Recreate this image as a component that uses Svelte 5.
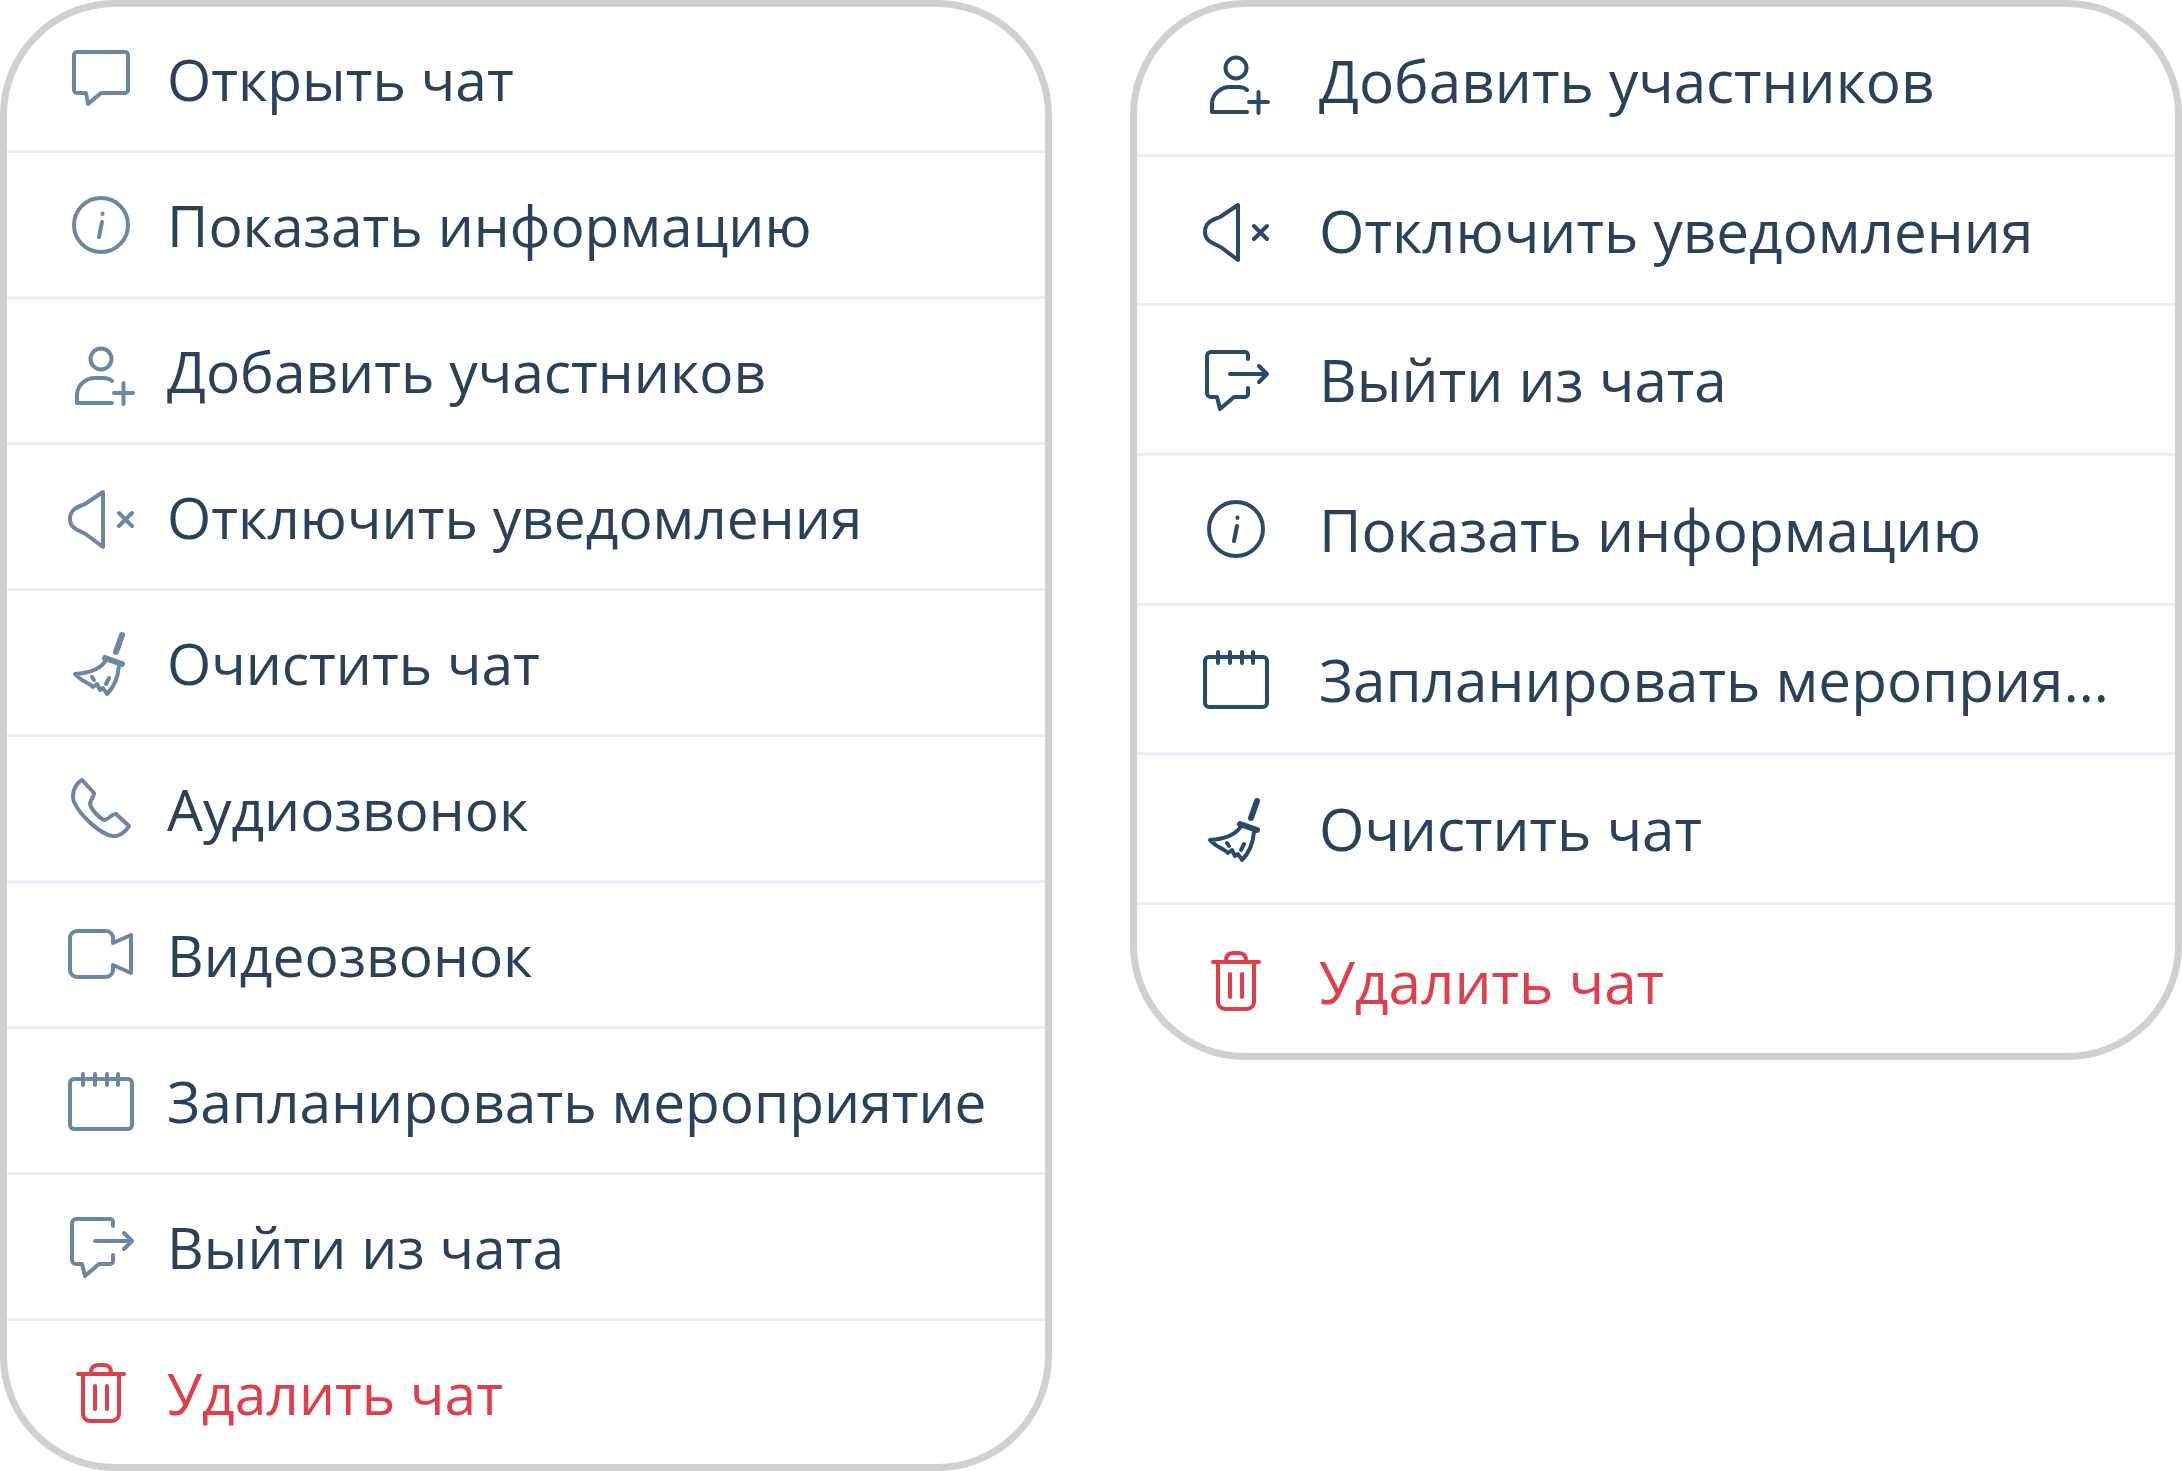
<script lang="ts">
  // icon paths are drawn on a 72x72 box, stroke only
  const icons: Record<string, string> = {
    chat: 'M12 9H60a3 3 0 0 1 3 3V47a3 3 0 0 1-3 3H36L23 61 21 50H12a3 3 0 0 1-3-3V12a3 3 0 0 1 3-3Z',
    info: 'M9 36a27 27 0 1 0 54 0a27 27 0 1 0-54 0ZM37.5 24.5v.5M37 33 34 48',
    user: 'M25.5 24a10.5 10.5 0 1 0 21 0a10.5 10.5 0 1 0-21 0ZM47 68H12V60C12 50 21 43 30 43H38C42 43 45 44 47 46M49 58H68M58.5 48V69',
    mute: 'M38 11V66L22 54C17 50 5 49 5 38C5 28 13 26 20 23ZM54 32 67 45M67 32 54 45',
    broom:
      'M41 33C36 42 24 46 10 47C16 54 24 56 28 60L32 57 35 63 38 61 42 67C49 60 53 50 54 39M29 53 27 50M41 57 44 51',
    phone:
      'M17 7 29 20C30 22 25 27 25 31C26 36 34 45 39 47C43 47 48 40 51 41L64 53C60 60 53 64 47 63C36 61 16 44 9 29C6 21 10 11 17 7Z',
    video:
      'M12 12H41a7 7 0 0 1 7 7v5L66 16V54L48 46v5a7 7 0 0 1-7 7H12a7 7 0 0 1-7-7V19a7 7 0 0 1 7-7Z',
    calendar:
      'M9 14H63a4 4 0 0 1 4 4V60a4 4 0 0 1-4 4H9a4 4 0 0 1-4-4V18a4 4 0 0 1 4-4ZM18 9V20M30 9V20M42 9V20M53 9V20',
    exit:
      'M48 15V11a3 3 0 0 0-3-3H11a4 4 0 0 0-4 4V49a4 4 0 0 0 4 4H17L20 65 34 53H45a3 3 0 0 0 3-3V44M30 30H66M59 22 67 30 59 38',
    trash:
      'M13 17H59M26 16C26 10 29 8 33 8H39C43 8 46 10 46 16M18 18V57a7 7 0 0 0 7 7H47a7 7 0 0 0 7-7V18M30 29V52M42 29V52'
  };

  // broom handle and ferrule are heavier than the other strokes
  const heavy: Record<string, string> = {
    broom: 'M57 8 51 25M40 31 57 37'
  };

  const left = [
    ['chat', 'Открыть чат'],
    ['info', 'Показать информацию'],
    ['user', 'Добавить участников'],
    ['mute', 'Отключить уведомления'],
    ['broom', 'Очистить чат'],
    ['phone', 'Аудиозвонок'],
    ['video', 'Видеозвонок'],
    ['calendar', 'Запланировать мероприятие'],
    ['exit', 'Выйти из чата'],
    ['trash', 'Удалить чат']
  ];

  const right = [
    ['user', 'Добавить участников'],
    ['mute', 'Отключить уведомления'],
    ['exit', 'Выйти из чата'],
    ['info', 'Показать информацию'],
    ['calendar', 'Запланировать мероприятие'],
    ['broom', 'Очистить чат'],
    ['trash', 'Удалить чат']
  ];
</script>

{#snippet menu(items: string[][], cls: string)}
  <ul class="card {cls}">
    {#each items as [icon, label]}
      <li class="row" class:danger={icon === 'trash'}>
        <svg class="icon" viewBox="0 0 72 72" fill="none" stroke="currentColor" aria-hidden="true">
          <path d={icons[icon]} />
          {#if heavy[icon]}
            <path class="heavy" d={heavy[icon]} />
          {/if}
        </svg>
        <span class="label">{label}</span>
      </li>
    {/each}
  </ul>
{/snippet}

<div class="page">
  {@render menu(left, 'tall')}
  {@render menu(right, 'short')}
</div>

<style>
  :global(body) {
    background: #fff;
  }

  .page {
    display: flex;
    justify-content: space-between;
    align-items: flex-start;
    width: 2182px;
    height: 1471px;
    font-family: 'Open Sans', sans-serif;
  }

  .card {
    display: flex;
    flex-direction: column;
    box-sizing: border-box;
    width: 1052px;
    margin: 0;
    padding: 0;
    list-style: none;
    background: #fff;
    border: 7px solid #d0d0d0;
    border-radius: 115px;
    overflow: hidden;
  }

  .tall {
    height: 1471px;
  }

  .short {
    height: 1060px;
  }

  .row {
    flex: 1;
    display: flex;
    align-items: center;
    gap: 30px;
    min-width: 0;
    padding: 0 30px 0 58px;
    border-bottom: 3px solid #e9eff6;
    font-size: 56.85px;
    color: #2b4158;
  }

  .row:last-child {
    border-bottom: none;
  }

  .short .row {
    flex: none;
    box-sizing: border-box;
    height: 149.7px;
    gap: 47px;
    padding: 0 50px 0 63px;
    font-size: 58.4px;
  }

  .short .row:last-child {
    flex: 1;
    padding-top: 4px;
  }

  .icon {
    flex: none;
    width: 72px;
    height: 72px;
    color: #6e87a1;
    stroke-width: 4;
    stroke-linecap: round;
    stroke-linejoin: round;
  }

  .heavy {
    stroke-width: 6;
  }

  .short .icon {
    color: #2b4a68;
  }

  .row.danger,
  .row.danger .icon {
    color: #dd3f4b;
  }

  .label {
    min-width: 0;
    white-space: nowrap;
    overflow: hidden;
    text-overflow: ellipsis;
  }
</style>
